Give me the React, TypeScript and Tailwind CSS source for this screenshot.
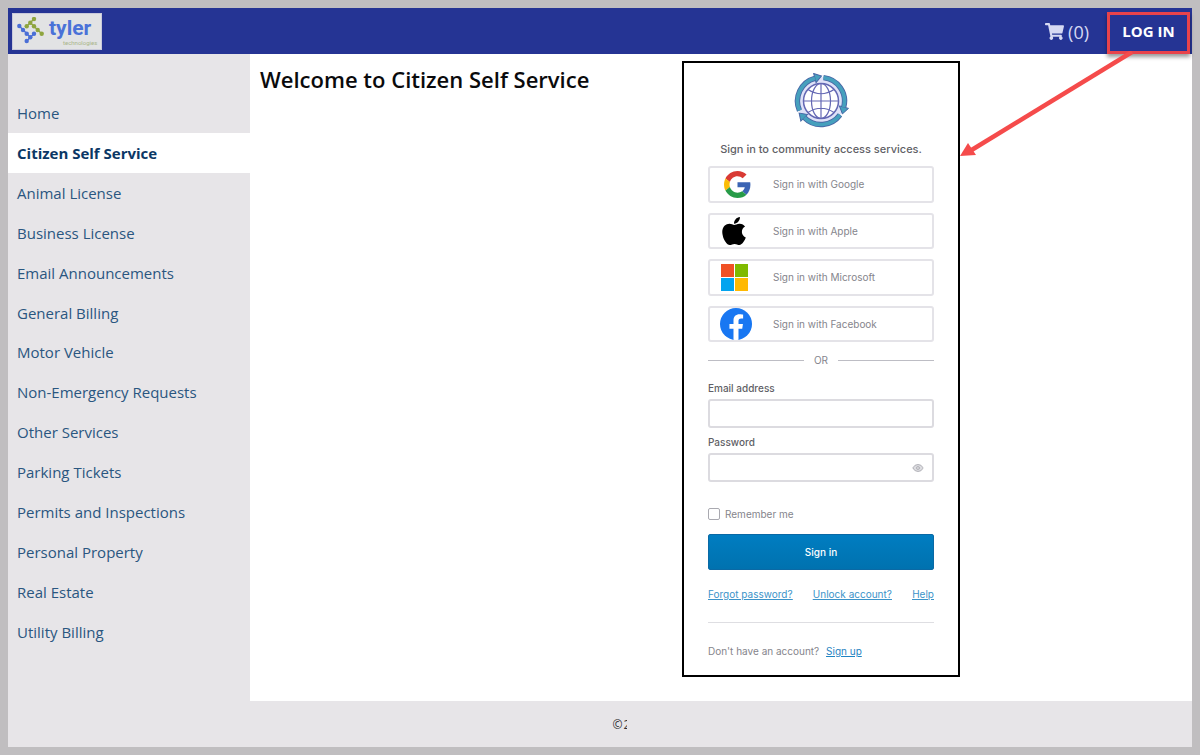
import React from "react";
import { FaApple, FaShoppingCart } from "react-icons/fa";
import { Eye } from "lucide-react";

const navItems = [
  "Home",
  "Citizen Self Service",
  "Animal License",
  "Business License",
  "Email Announcements",
  "General Billing",
  "Motor Vehicle",
  "Non-Emergency Requests",
  "Other Services",
  "Parking Tickets",
  "Permits and Inspections",
  "Personal Property",
  "Real Estate",
  "Utility Billing",
];

function TylerLogo() {
  const blue = [[2.3, 9], [6, 13], [9.7, 16.7], [13.3, 20.3], [9.7, 24], [17, 16.7]];
  const green = [[17, 2], [13.3, 5.7], [9.7, 9.3], [17, 9.3], [20.7, 13], [24.7, 16.7]];
  return (
    <a href="#" aria-label="Tyler Technologies" className="flex h-[37px] w-[90px] items-center border border-[#c9cadb] bg-[#e2e3e4] pl-1">
      <svg viewBox="0 0 28 28" className="h-7 w-7 shrink-0">
        <path d="M2.3 9L13.3 20.3M9.7 24L17 16.7" stroke="#4a6fd6" strokeWidth="1.4" />
        <path d="M17 2L9.7 9.3M13.3 5.7L24.7 16.7" fill="none" stroke="#8ea53f" strokeWidth="1.4" />
        {blue.map(([x, y]) => (
          <circle key={`${x}-${y}`} cx={x} cy={y} r="2.2" fill="#4a6fd6" />
        ))}
        {green.map(([x, y]) => (
          <circle key={`${x}-${y}`} cx={x} cy={y} r="2.2" fill="#8ea53f" />
        ))}
      </svg>
      <span className="flex flex-col pl-1">
        <span className="font-['Roboto'] text-[21px] leading-[22px] font-bold text-[#4a72d8]">tyler</span>
        <span className="pl-[14px] font-['Roboto'] text-[6px] leading-[7px] text-[#a9b58a]">technologies</span>
      </span>
    </a>
  );
}

function GlobeLogo() {
  const arc = "M30.5 4.6 A23.5 23.5 0 0 1 50.7 34.1";
  return (
    <svg viewBox="0 0 56 56" className="h-14 w-14" fill="none">
      <circle cx="28" cy="28" r="24" fill="#dfe2f8" />
      {[0, 120, 240].map((angle) => (
        <g key={angle} transform={`rotate(${angle} 28 28)`}>
          <path d={arc} stroke="#4866a6" strokeWidth="5.4" />
          <path d="M46.4 32.9 L55.5 35.4 L49.4 40.9 Z" fill="#46a0bd" stroke="#4866a6" strokeWidth="1" />
          <path d={arc} stroke="#46a0bd" strokeWidth="3.6" />
        </g>
      ))}
      <circle cx="28" cy="28" r="17.5" fill="#fff" stroke="#6468b4" strokeWidth="1.5" />
      <g stroke="#6468b4" strokeWidth="1.2">
        <ellipse cx="28" cy="28" rx="9.5" ry="17.5" />
        <path d="M28 10.5V45.5M10.5 28H45.5M15 16.5Q28 25 41 16.5M15 39.5Q28 31 41 39.5" />
      </g>
    </svg>
  );
}

function GoogleIcon() {
  return (
    <svg viewBox="0 0 48 48" className="ml-1 h-[27px] w-[27px]">
      <path fill="#d93a34" d="M24 9.5c3.54 0 6.71 1.22 9.21 3.6l6.85-6.85C35.9 2.38 30.47 0 24 0 14.62 0 6.51 5.38 2.56 13.22l7.98 6.19C12.43 13.72 17.74 9.5 24 9.5z" />
      <path fill="#3b64b4" d="M46.98 24.55c0-1.57-.15-3.09-.38-4.55H24v9.02h12.94c-.58 2.96-2.26 5.48-4.78 7.18l7.73 6c4.51-4.18 7.09-10.36 7.09-17.65z" />
      <path fill="#fbbc05" d="M10.53 28.59c-.48-1.45-.76-2.99-.76-4.59s.27-3.14.76-4.59l-7.98-6.19C.92 16.46 0 20.12 0 24s.92 7.54 2.56 10.78l7.97-6.19z" />
      <path fill="#279b48" d="M24 48c6.48 0 11.93-2.13 15.89-5.81l-7.73-6c-2.15 1.45-4.92 2.3-8.16 2.3-6.26 0-11.57-4.22-13.47-9.91l-7.98 6.19C6.51 42.62 14.62 48 24 48z" />
    </svg>
  );
}

function MicrosoftIcon() {
  return (
    <svg viewBox="0 0 27 27" className="ml-px h-[27px] w-[27px]">
      <path fill="#f05125" d="M0 0h13v13H0z" />
      <path fill="#7fba00" d="M14 0h13v13H14z" />
      <path fill="#03a4ef" d="M0 14h13v13H0z" />
      <path fill="#ffb902" d="M14 14h13v13H14z" />
    </svg>
  );
}

function FacebookIcon() {
  return (
    <svg viewBox="0 0 24 24" className="h-8 w-8">
      <circle cx="12" cy="12" r="12" fill="#1877f2" />
      <path fill="#fff" d="M16.67 15.47l.53-3.47h-3.33V9.75c0-.95.47-1.87 1.96-1.87h1.51V4.92s-1.37-.24-2.69-.24c-2.74 0-4.53 1.66-4.53 4.67V12H7.08v3.47h3.04v8.38a12.1 12.1 0 0 0 3.75 0v-8.38h2.8z" />
    </svg>
  );
}

const providers = [
  { name: "Google", icon: <GoogleIcon /> },
  { name: "Apple", icon: <FaApple className="h-8 w-7 text-black" /> },
  { name: "Microsoft", icon: <MicrosoftIcon /> },
  { name: "Facebook", icon: <FacebookIcon /> },
];

function SignInPanel() {
  return (
    <section className="flex w-[278px] shrink-0 flex-col border-2 border-black bg-white px-6 pt-[10px] font-['Inter',sans-serif] text-[10px] leading-4 text-[#85858c]">
      <div className="flex justify-center">
        <GlobeLogo />
      </div>
      <p className="mt-3 text-center text-[11px] leading-4 font-medium whitespace-nowrap text-[#5f5f66]">
        Sign in to community access services.
      </p>
      <div className="mt-[9px] grid h-[176px] grid-rows-4 gap-[10px]">
        {providers.map((p) => (
          <button key={p.name} type="button" className="flex items-center rounded-[3px] border-2 border-[#e4e3e8] bg-white pl-[10px] text-left">
            <span className="w-[53px] shrink-0">{p.icon}</span>
            <span>Sign in with {p.name}</span>
          </button>
        ))}
      </div>
      <div className="mt-[10px] flex items-center gap-[10px]">
        <span className="h-px flex-1 bg-[#bdbdc4]" />
        <span>OR</span>
        <span className="h-px flex-1 bg-[#bdbdc4]" />
      </div>
      <form onSubmit={(e) => e.preventDefault()} className="flex flex-col">
        <label htmlFor="email" className="mt-3 font-medium text-[#5f5f66]">Email address</label>
        <input id="email" type="email" className="mt-[3px] h-[29px] rounded-[3px] border-2 border-[#dcdbe0] bg-white px-2 outline-none" />
        <label htmlFor="password" className="mt-[6px] font-medium text-[#5f5f66]">Password</label>
        <div className="mt-[3px] flex h-[29px] items-center rounded-[3px] border-2 border-[#dcdbe0] bg-white pr-2">
          <input id="password" type="password" className="min-w-0 flex-1 bg-transparent px-2 outline-none" />
          <button type="button" aria-label="Show password">
            <Eye className="h-3 w-3 fill-[#dddde1] text-[#b4b4ba]" />
          </button>
        </div>
        <label className="mt-6 flex items-center gap-[5px]">
          <input type="checkbox" className="h-3 w-3 appearance-none rounded-[2px] border border-[#a9a9b0] bg-white" />
          Remember me
        </label>
        <button type="submit" className="mt-3 h-9 rounded-[2px] border border-[#0a69a5] bg-linear-to-b from-[#007dc1] to-[#0072af] font-medium text-white">
          Sign in
        </button>
      </form>
      <div className="mt-4 flex justify-between text-[#3b93c9] underline">
        <a href="#">Forgot password?</a>
        <a href="#">Unlock account?</a>
        <a href="#">Help</a>
      </div>
      <hr className="mt-5 border-[#dedee2]" />
      <p className="mt-5">
        Don't have an account? <a href="#" className="ml-1 text-[#1f84c2] underline">Sign up</a>
      </p>
    </section>
  );
}

export default function App() {
  return (
    <div className="flex min-h-screen flex-col border-8 border-[#c0bec0] bg-[#e7e5e8] font-['Open_Sans','Noto_Sans',sans-serif]">
      <header className="relative flex h-[46px] items-center justify-between bg-[#253494] pr-[2px] pl-1">
        <TylerLogo />
        <div className="flex items-center gap-[18px]">
          <a href="#" aria-label="Cart" className="flex items-center gap-1 pt-px text-lg leading-6 text-[#d6d9f3]">
            <FaShoppingCart className="h-[17px] w-[19px]" />
            <span>(0)</span>
          </a>
          <button type="button" className="mt-1 h-[42px] w-[83px] border-3 border-[#e8434b] pb-1 text-[15px] leading-5 font-bold text-white shadow-[0_3px_4px_rgba(0,0,0,0.4)]">
            LOG IN
          </button>
        </div>
        <svg viewBox="0 0 176 108" className="pointer-events-none absolute top-[43px] right-[56px] z-10 h-[108px] w-[176px]">
          <path d="M172 1 L10 100" stroke="#f54b4b" strokeWidth="4.5" />
          <path d="M0 105 L8 92 L16 104 Z" fill="#f54b4b" />
        </svg>
      </header>
      <div className="flex grow">
        <nav className="flex w-[242px] shrink-0 flex-col pt-[39px] pb-[49px]">
          {navItems.map((item) => (
            <a
              key={item}
              href="#"
              className={
                item === "Citizen Self Service"
                  ? "flex flex-1 items-center bg-white pl-[9px] text-[15px] leading-5 font-bold text-[#0b3765]"
                  : "flex flex-1 items-center pl-[9px] text-[15px] leading-5 text-[#2a5680]"
              }
            >
              {item}
            </a>
          ))}
        </nav>
        <main className="flex flex-1 justify-between bg-white pt-[7px] pr-[232px] pb-6 pl-[10px]">
          <h1 className="pt-[6px] text-[22px] leading-6 font-semibold text-[#0a0a0c]">Welcome to Citizen Self Service</h1>
          <SignInPanel />
        </main>
      </div>
      <footer className="flex h-[46px] items-center justify-center pt-px pl-10 text-[12px] leading-4 text-[#2f2f33]">
        <span className="mr-px">©</span>
        <span className="w-1 overflow-hidden">2</span>
      </footer>
    </div>
  );
}
